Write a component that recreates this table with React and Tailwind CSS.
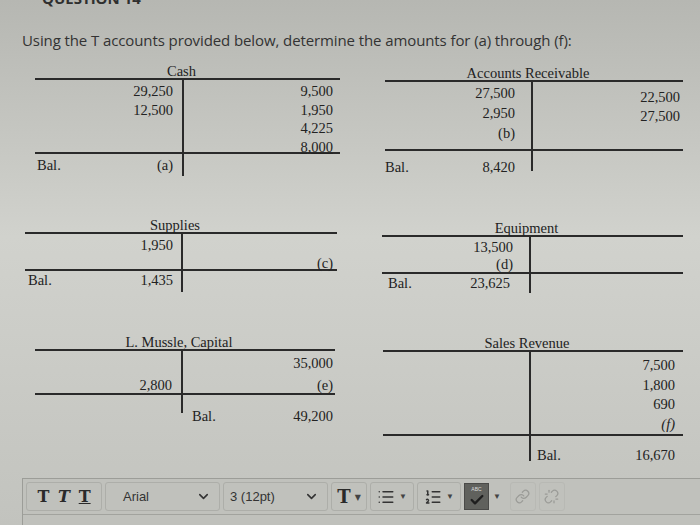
import { ChevronDown, List, ListOrdered, Link, Unlink, Check } from "lucide-react";

// T-account worksheet photographed off a screen: greyish page, serif ledgers,
// and the text-editor toolbar peeking in at the bottom.
const ACCOUNTS = [
  [
    {
      title: "Cash",
      box: "ml-[35px] w-[305px]",
      leftW: "w-[149px]",
      bodyH: "h-[76px]",
      left: { pad: "pt-[2px] pr-[9px]", row: "h-[19px] leading-[19px]", items: ["29,250", "12,500"] },
      right: { pad: "pt-[2px] pr-[7px]", row: "h-[18.5px] leading-[18.5px]", items: ["9,500", "1,950", "4,225", <span className="underline underline-offset-1">8,000</span>] },
      bal: { side: "left", h: "h-[22px]", pad: "pt-[2px] pl-[2px] pr-[9px]", value: "(a)" },
    },
    {
      title: "Accounts Receivable",
      box: "ml-[45px] mt-[2px] w-[298px]",
      leftW: "w-[148px]",
      bodyH: "h-[71px]",
      left: { pad: "pt-[1px] pr-[16px]", row: "h-[20px] leading-[20px]", items: ["27,500", "2,950", "(b)"] },
      right: { pad: "pt-[6px] pr-[3px]", row: "h-[19px] leading-[19px]", items: ["22,500", "27,500"] },
      bal: { side: "left", h: "h-[20px]", pad: "pt-[7px] pl-0 pr-[16px]", value: "8,420" },
    },
  ],
  [
    {
      title: "Supplies",
      box: "ml-[25px] w-[312px]",
      leftW: "w-[158px]",
      bodyH: "h-[39px]",
      left: { pad: "pt-[2px] pr-[8px]", row: "h-[19px] leading-[19px]", items: ["1,950"] },
      right: { pad: "pt-[2px] pr-[4px]", row: "h-[18px] leading-[18px]", items: ["", "(c)"] },
      bal: { side: "left", h: "h-[21px]", pad: "pt-0 pl-[3px] pr-[8px]", value: "1,435" },
    },
    {
      title: "Equipment",
      box: "ml-[45px] mt-[3px] w-[301px]",
      leftW: "w-[149px]",
      bodyH: "h-[39px]",
      left: { pad: "pt-[2px] pr-[16px]", row: "h-[17px] leading-[17px]", items: ["13,500", "(d)"] },
      right: { pad: "pt-[3px] pr-[4px]", row: "h-[18px] leading-[18px]", items: [] },
      bal: { side: "left", h: "h-[19px]", pad: "pt-0 pl-[6px] pr-[19px]", value: "23,625" },
    },
  ],
  [
    {
      title: "L. Mussle, Capital",
      box: "ml-[35px] w-[300px]",
      leftW: "w-[148px]",
      bodyH: "h-[46px]",
      left: { pad: "pt-[1px] pr-[9px]", row: "h-[22px] leading-[22px]", items: ["", "2,800"] },
      right: { pad: "pt-[1px] pr-[2px]", row: "h-[22px] leading-[22px]", items: ["35,000", "(e)"] },
      bal: { side: "right", h: "h-[18px]", pad: "pt-[12px] pl-[9px] pr-[2px]", value: "49,200" },
    },
    {
      title: "Sales Revenue",
      box: "ml-[48px] mt-[1px] w-[300px]",
      leftW: "w-[148px]",
      bodyH: "h-[86px]",
      left: { pad: "pt-[4px] pr-[9px]", row: "h-[19.5px] leading-[19.5px]", items: [] },
      right: { pad: "pt-[4px] pr-[8px]", row: "h-[19.5px] leading-[19.5px]", items: ["7,500", "1,800", "690", <span className="italic">(f)</span>] },
      bal: { side: "right", h: "h-[25px]", pad: "pt-[10px] pl-[6px] pr-[8px]", value: "16,670" },
    },
  ],
];

const ROW_H = ["h-[154px]", "h-[117px]", "h-[142px]"];

function TAccount({ a }) {
  const balRow = (
    <div className={`flex justify-between leading-[19px] ${a.bal.pad}`}>
      <span>Bal.</span>
      <span>{a.bal.value}</span>
    </div>
  );
  return (
    <div className={a.box}>
      <div className="text-center leading-[13px] pr-[12px]">{a.title}</div>
      <div className={`flex border-y-2 border-[#2a2a2a] ${a.bodyH}`}>
        <div className={`${a.leftW} shrink-0 border-r-2 border-[#2a2a2a] text-right ${a.left.pad}`}>
          {a.left.items.map((v, i) => (
            <div key={i} className={a.left.row}>{v}</div>
          ))}
        </div>
        <div className={`flex-1 text-right ${a.right.pad}`}>
          {a.right.items.map((v, i) => (
            <div key={i} className={a.right.row}>{v}</div>
          ))}
        </div>
      </div>
      <div className="flex items-start">
        <div className={`${a.leftW} ${a.bal.h} shrink-0 border-r-2 border-[#2a2a2a]`}>
          {a.bal.side === "left" && balRow}
        </div>
        <div className="flex-1">{a.bal.side === "right" && balRow}</div>
      </div>
    </div>
  );
}

function Btn({ children, className = "" }) {
  return (
    <div className={`h-[29px] flex items-center rounded-[3px] border border-[#adaea9] ${className}`}>
      {children}
    </div>
  );
}

function Caret() {
  return <span className="text-[8px] text-[#444] ml-[4px]">▼</span>;
}

export default function App() {
  return (
    <div className="w-[700px] h-[525px] overflow-hidden bg-linear-to-b from-[#b6b7b2] via-[#d1d2cd] via-45% to-[#c2c3be] text-[#222]">
      <div className="pl-[42px] -mt-[12px] h-[20px] leading-[20px] font-['Open_Sans'] font-bold text-[15px] text-[#2f2f2f]">
        QUESTION 14
      </div>
      <div className="pl-[22px] mt-[22px] h-[20px] leading-[20px] font-['Open_Sans'] text-[15px] text-[#333] tracking-[-0.1px]">
        Using the T accounts provided below, determine the amounts for (a) through (f):
      </div>

      <div className="mt-[15px] font-['Liberation_Serif',serif] text-[14.5px]">
        {ACCOUNTS.map((pair, i) => (
          <div key={i} className={`flex items-start ${ROW_H[i]}`}>
            {pair.map((a) => (
              <TAccount key={a.title} a={a} />
            ))}
          </div>
        ))}
      </div>

      <div className="ml-[22px] border-l border-t border-[#9c9d98] bg-[#c0c1bc] h-[47px] font-['Liberation_Sans',sans-serif] text-[#333]">
        <div className="flex items-center h-[34px] gap-[3px] pl-[3px] pt-[1px]">
          <Btn className="w-[76px] justify-around px-[6px] font-['DejaVu_Serif',serif] font-bold text-[16px] text-[#2a2a2a]">
            <span>T</span>
            <span className="italic">T</span>
            <span className="underline">T</span>
          </Btn>
          <Btn className="w-[115px] justify-between pl-[17px] pr-[8px] text-[13px]">
            <span>Arial</span>
            <ChevronDown size={15} strokeWidth={2.5} />
          </Btn>
          <Btn className="w-[105px] justify-between pl-[6px] pr-[8px] text-[13px]">
            <span>3 (12pt)</span>
            <ChevronDown size={15} strokeWidth={2.5} />
          </Btn>
          <Btn className="w-[36px] justify-center font-['DejaVu_Serif',serif] font-bold text-[18px] text-[#2a2a2a]">
            <span>T</span>
            <Caret />
          </Btn>
          <Btn className="w-[44px] justify-center">
            <List size={18} strokeWidth={2} />
            <Caret />
          </Btn>
          <Btn className="w-[44px] justify-center">
            <ListOrdered size={18} strokeWidth={2} />
            <Caret />
          </Btn>
          <div className="flex items-center">
            <div className="w-[25px] h-[27px] bg-[#60615d] border border-[#4a4a48] flex flex-col items-center justify-center">
              <span className="text-[5px] leading-[6px] text-[#ddd]">ABC</span>
              <Check size={16} strokeWidth={3.5} className="text-[#1e1e1e]" />
            </div>
            <Caret />
          </div>
          <Btn className="w-[26px] justify-center ml-[6px] border-[#b8b9b4]">
            <Link size={15} className="text-[#9a9b97]" />
          </Btn>
          <Btn className="w-[26px] justify-center border-[#b8b9b4]">
            <Unlink size={15} className="text-[#9a9b97]" />
          </Btn>
        </div>
        <div className="mt-[1px] border-t border-[#a2a39e]" />
      </div>
    </div>
  );
}
